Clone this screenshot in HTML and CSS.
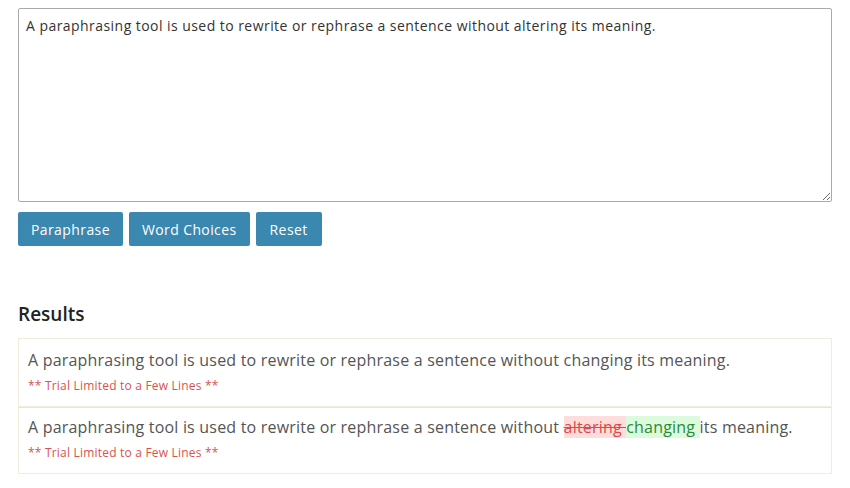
FILE: index.html
```html
<!DOCTYPE html>
<html>
<head>
    <title>Paraphrasing Tool</title>
    <link rel="stylesheet" href="styles.css">
</head>
<body>
    <div class="container">
        <textarea id="inputText">A paraphrasing tool is used to rewrite or rephrase a sentence without altering its meaning.</textarea>

        <div class="actions">
            <button>Paraphrase</button>
            <button>Word Choices</button>
            <button class="reset">Reset</button>
        </div>

        <h3 class="results-title">Results</h3>
        <div class="result">
            <p class="result-text">A paraphrasing tool is used to rewrite or rephrase a sentence without changing its meaning.</p>
            <p class="trial">** Trial Limited to a Few Lines **</p>
        </div>
        <div class="result">
            <p class="result-text">A paraphrasing tool is used to rewrite or rephrase a sentence without <del>altering </del><ins>changing </ins>its meaning.</p>
            <p class="trial">** Trial Limited to a Few Lines **</p>
        </div>
    </div>
</body>
</html>
```
FILE: styles.css
```css
body { margin: 0; padding: 8px 18px; font-family: "Open Sans", sans-serif; color: #333; background: #fff; }
.container { width: 814px; }
textarea { display: block; width: 100%; height: 194px; box-sizing: border-box; padding: 7px 7px; border: 1px solid #aaa; border-radius: 2px; font-family: "Open Sans", sans-serif; font-size: 14px; letter-spacing: 0.45px; color: #333; resize: vertical; }
.actions { display: flex; gap: 6px; margin-top: 10px; }
button { height: 34px; padding: 0 13px; background-color: #3a87b0; color: #fff; border: none; border-radius: 2px; font-family: "Open Sans", sans-serif; font-size: 14px; letter-spacing: 0.4px; cursor: pointer; }
.reset { padding: 0 14px; }
.results-title { margin: 55px 0 11px; font-size: 19px; font-weight: 600; color: #222; }
.result { border: 1px solid #f1ecdc; padding: 9px 9px 12px; }
.result + .result { border-top-color: #ece5d0; padding-top: 7px; }
.result-text { margin: 0; font-size: 16px; letter-spacing: 0.2px; color: #555; line-height: 24px; }
.trial { margin: 5px 0 0; font-size: 12px; letter-spacing: 0.2px; color: #d9534f; }
del { background: #fdd; color: #e04848; text-decoration: line-through; }
ins { background: #dcfadc; color: #2a8a3a; text-decoration: none; }
```
